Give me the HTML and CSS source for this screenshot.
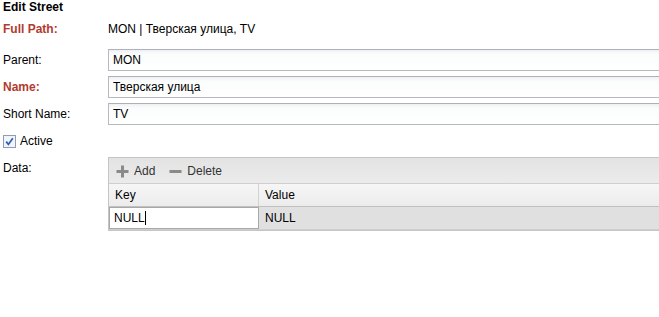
FILE: index.html
```html
<!DOCTYPE html>
<html lang="en">
<head>
    <meta charset="UTF-8">
    <title>Edit Street</title>
    <link rel="stylesheet" href="styles.css">
</head>
<body>
    <div class="form">
        <div class="title">Edit Street</div>

        <div class="row path-row">
            <div class="label required">Full Path:</div>
            <div class="value">MON | Тверская улица, TV</div>
        </div>

        <div class="row field-row first">
            <label class="label" for="parent">Parent:</label>
            <input class="text-field" id="parent" value="MON">
        </div>
        <div class="row field-row">
            <label class="label required" for="name">Name:</label>
            <input class="text-field" id="name" value="Тверская улица">
        </div>
        <div class="row field-row">
            <label class="label" for="short">Short Name:</label>
            <input class="text-field" id="short" value="TV">
        </div>

        <div class="check-row">
            <span class="checkbox">
                <svg width="13" height="13" viewBox="0 0 13 13">
                    <rect x="0.5" y="0.5" width="12" height="12" fill="#f1f4f9" stroke="#8e9cb6"/>
                    <path d="M3.2 6.6 L5.4 9.4 L9.8 3.2" fill="none" stroke="#2f5fb0" stroke-width="1.7"/>
                </svg>
            </span>
            <span>Active</span>
        </div>

        <div class="row data-row">
            <div class="label data-label">Data:</div>
            <div class="grid">
                <div class="toolbar">
                    <span class="tool">
                        <svg width="13" height="13" viewBox="0 0 13 13">
                            <rect x="5" y="0.5" width="3" height="12" fill="#8a8a8a"/>
                            <rect x="0.5" y="5" width="12" height="3" fill="#8a8a8a"/>
                        </svg>
                        Add
                    </span>
                    <span class="tool">
                        <svg width="13" height="13" viewBox="0 0 13 13">
                            <rect x="0.5" y="5" width="12" height="3" fill="#8a8a8a"/>
                        </svg>
                        Delete
                    </span>
                </div>
                <div class="grid-head">
                    <div class="col key-col">Key</div>
                    <div class="col">Value</div>
                </div>
                <div class="grid-row">
                    <div class="key-col editor-cell">
                        <div class="editor">NULL<span class="caret"></span></div>
                    </div>
                    <div class="col">NULL</div>
                </div>
            </div>
        </div>
    </div>
</body>
</html>
```

FILE: styles.css
```css
body {
    margin: 0;
    font-family: "Liberation Sans", Arial, sans-serif;
    font-size: 12px;
    color: #000;
    background: #fff;
    overflow: hidden;
}

.form {
    width: 100%;
    overflow: hidden;
}

.title {
    font-weight: bold;
    line-height: 15px;
    padding-left: 3px;
}

.row {
    display: flex;
    align-items: center;
}

.label {
    width: 105px;
    padding-left: 3px;
    flex: none;
}

.required {
    color: #b23a2e;
    font-weight: bold;
}

.path-row {
    margin-top: 6px;
    line-height: 16px;
}

.field-row {
    margin-top: 5px;
}

.field-row.first {
    margin-top: 12px;
}

.text-field {
    box-sizing: border-box;
    flex: none;
    width: 600px;
    height: 22px;
    margin: 0;
    padding: 0 4px;
    border: 1px solid #b8b8c0;
    border-top-color: #b0b0bc;
    background: linear-gradient(#eef0f2 0, #fbfcfc 4px, #fff 100%);
    font-family: inherit;
    font-size: 12px;
    color: #000;
    outline: none;
}

.check-row {
    display: flex;
    align-items: center;
    gap: 4px;
    margin-top: 8px;
    padding-left: 3px;
    height: 16px;
}

.checkbox {
    display: flex;
}

.data-row {
    align-items: flex-start;
    margin-top: 8px;
}

.data-label {
    padding-top: 4px;
}

.grid {
    flex: none;
    width: 600px;
    border: 1px solid #c5c5c5;
    border-right: none;
}

.toolbar {
    display: flex;
    align-items: center;
    gap: 14px;
    height: 24px;
    padding-left: 7px;
    padding-top: 1px;
    background: linear-gradient(#e3e3e3, #ebebeb);
    color: #333;
    border-bottom: 1px solid #cfcfcf;
}

.tool {
    display: flex;
    align-items: center;
    gap: 5px;
}

.grid-head {
    display: flex;
    height: 22px;
    align-items: stretch;
    background: linear-gradient(#f6f6f6, #ececec);
    border-bottom: 1px solid #c0c0c0;
}

.col {
    display: flex;
    align-items: center;
    padding-left: 6px;
}

.key-col {
    box-sizing: border-box;
    width: 150px;
    border-right: 1px solid #d2d2d2;
}

.grid-row {
    display: flex;
    height: 22px;
    background: #e0e0e0;
    border-bottom: 1px solid #cfcfcf;
}

.editor-cell {
    border-right: none;
}

.editor {
    box-sizing: border-box;
    height: 22px;
    width: 150px;
    display: flex;
    align-items: center;
    padding-left: 4px;
    background: #fff;
    border: 1px solid #a8a8a8;
}

.caret {
    display: inline-block;
    width: 1px;
    height: 14px;
    background: #000;
}
```
